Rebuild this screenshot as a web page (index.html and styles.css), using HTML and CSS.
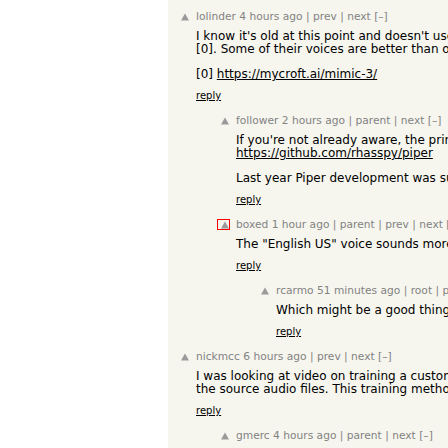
FILE: index.html
```html
<!DOCTYPE html>
<html>
<head>
<meta charset="utf-8">
<title>Comments</title>
<link rel="stylesheet" href="styles.css">
</head>
<body>
<div class="page">
  <div class="thread">

    <div class="comtr depth-0">
      <div class="votelinks"><a class="vote" href="#"><svg class="arrow" viewBox="0 0 8 8" width="8" height="8"><polygon points="4,0.5 8,7.5 0,7.5"/></svg></a></div>
      <div class="default">
        <div class="comhead"><a href="#">lolinder</a> <a href="#">4 hours ago</a> | <a href="#">prev</a> | <a href="#">next</a> <a href="#">[–]</a></div>
        <div class="commtext">I know it's old at this point and doesn't use the newest neural models, but I still use Mimic 3<br>[0]. Some of their voices are better than others, and it runs entirely offline.
          <p>[0] <a href="#">https://mycroft.ai/mimic-3/</a></p>
        </div>
        <div class="reply"><a href="#">reply</a></div>
      </div>
    </div>

    <div class="comtr depth-1">
      <div class="votelinks"><a class="vote" href="#"><svg class="arrow" viewBox="0 0 8 8" width="8" height="8"><polygon points="4,0.5 8,7.5 0,7.5"/></svg></a></div>
      <div class="default">
        <div class="comhead"><a href="#">follower</a> <a href="#">2 hours ago</a> | <a href="#">parent</a> | <a href="#">next</a> <a href="#">[–]</a></div>
        <div class="commtext">If you're not already aware, the primary developer of Mimic 3 now works on Piper:<br><a href="#">https://github.com/rhasspy/piper</a>
          <p>Last year Piper development was supported by Nabu Casa as part of their voice work.</p>
        </div>
        <div class="reply"><a href="#">reply</a></div>
      </div>
    </div>

    <div class="comtr depth-1">
      <div class="votelinks"><a class="vote focused" href="#"><svg class="arrow" viewBox="0 0 8 8" width="8" height="8"><polygon points="4,0.5 8,7.5 0,7.5"/></svg></a></div>
      <div class="default">
        <div class="comhead"><a href="#">boxed</a> <a href="#">1 hour ago</a> | <a href="#">parent</a> | <a href="#">prev</a> | <a href="#">next</a> <a href="#">[–]</a></div>
        <div class="commtext">The "English US" voice sounds more natural than most of the others I tried.</div>
        <div class="reply"><a href="#">reply</a></div>
      </div>
    </div>

    <div class="comtr depth-2">
      <div class="votelinks"><a class="vote" href="#"><svg class="arrow" viewBox="0 0 8 8" width="8" height="8"><polygon points="4,0.5 8,7.5 0,7.5"/></svg></a></div>
      <div class="default">
        <div class="comhead"><a href="#">rcarmo</a> <a href="#">51 minutes ago</a> | <a href="#">root</a> | <a href="#">parent</a> | <a href="#">next</a> <a href="#">[–]</a></div>
        <div class="commtext">Which might be a good thing, depending on what you need it for.</div>
        <div class="reply"><a href="#">reply</a></div>
      </div>
    </div>

    <div class="comtr depth-0">
      <div class="votelinks"><a class="vote" href="#"><svg class="arrow" viewBox="0 0 8 8" width="8" height="8"><polygon points="4,0.5 8,7.5 0,7.5"/></svg></a></div>
      <div class="default">
        <div class="comhead"><a href="#">nickmcc</a> <a href="#">6 hours ago</a> | <a href="#">prev</a> | <a href="#">next</a> <a href="#">[–]</a></div>
        <div class="commtext">I was looking at video on training a custom voice and it only needs a few minutes of<br>the source audio files. This training method seems to work surprisingly well.</div>
        <div class="reply"><a href="#">reply</a></div>
      </div>
    </div>

    <div class="comtr depth-1">
      <div class="votelinks"><a class="vote" href="#"><svg class="arrow" viewBox="0 0 8 8" width="8" height="8"><polygon points="4,0.5 8,7.5 0,7.5"/></svg></a></div>
      <div class="default">
        <div class="comhead"><a href="#">gmerc</a> <a href="#">4 hours ago</a> | <a href="#">parent</a> | <a href="#">next</a> <a href="#">[–]</a></div>
        <div class="commtext">That is the part that worries me the most.</div>
      </div>
    </div>

  </div>
</div>
</body>
</html>
```

FILE: styles.css
```css
html, body {
  margin: 0;
  padding: 0;
  overflow: hidden;
  background: #ffffff;
}

body {
  font-family: Verdana, "DejaVu Sans", sans-serif;
  color: #000000;
}

.page {
  margin-left: 168px;
  width: 900px;
  min-height: 100vh;
  background: #f6f6ef;
}

.thread {
  padding: 11px 0 0 9px;
}

.comtr {
  display: flex;
  align-items: flex-start;
  margin-bottom: 13px;
}

.depth-1 { padding-left: 40px; }
.depth-2 { padding-left: 80px; }

.votelinks {
  flex: none;
  width: 19px;
}

.vote {
  display: block;
  box-sizing: border-box;
  width: 13px;
  height: 11px;
  border: 1px solid transparent;
  padding: 1px 0 0 3px;
}

.vote.focused {
  border-color: #ff0000;
}

.arrow {
  display: block;
  fill: #9a9a9a;
}

.default {
  flex: 1;
}

.comhead {
  font-size: 10.667px;
  line-height: 12px;
  color: #828282;
  white-space: nowrap;
}

.comhead a {
  color: #828282;
  text-decoration: none;
}

.commtext {
  margin-top: 7px;
  font-size: 12px;
  line-height: 13px;
  white-space: nowrap;
}

.commtext p {
  margin: 12px 0 0;
}

.commtext a {
  color: #000000;
  text-decoration: underline;
}

.reply {
  margin-top: 9px;
  font-size: 10px;
  line-height: 12px;
}

.reply a {
  color: #000000;
  text-decoration: underline;
}
```
